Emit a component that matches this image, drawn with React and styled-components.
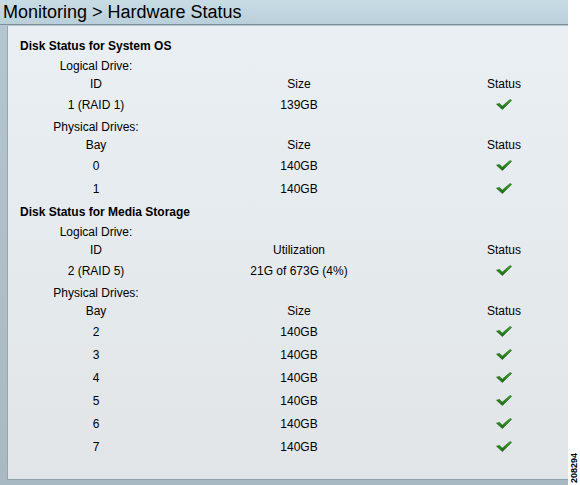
import React from "react";
import styled, { createGlobalStyle } from "styled-components";

const GlobalStyle = createGlobalStyle`
  body {
    margin: 0;
    background: #ffffff;
    font-family: "Liberation Sans", Arial, sans-serif;
  }
`;

const systemOs = {
  title: "Disk Status for System OS",
  logical: { head: ["ID", "Size", "Status"], rows: [["1 (RAID 1)", "139GB"]] },
  physical: {
    head: ["Bay", "Size", "Status"],
    rows: [
      ["0", "140GB"],
      ["1", "140GB"]
    ]
  }
};

const mediaStorage = {
  title: "Disk Status for Media Storage",
  logical: {
    head: ["ID", "Utilization", "Status"],
    rows: [["2 (RAID 5)", "21G of 673G (4%)"]]
  },
  physical: {
    head: ["Bay", "Size", "Status"],
    rows: ["2", "3", "4", "5", "6", "7"].map((b) => [b, "140GB"])
  }
};

function Check() {
  return (
    <svg width="16" height="11" viewBox="0 0 16 11">
      <defs>
        <linearGradient id="chk" x1="0" y1="0" x2="0" y2="1">
          <stop offset="0" stopColor="#3fae2a" />
          <stop offset="1" stopColor="#17650f" />
        </linearGradient>
      </defs>
      <path
        d="M0.5 5.2 L3.6 4.4 L6.2 7.2 L14.2 0.4 L15.6 1.4 L6.4 10.6 Z"
        fill="url(#chk)"
        stroke="#1b5e12"
        strokeWidth="0.6"
        strokeLinejoin="round"
      />
    </svg>
  );
}

function DriveTable({ label, data }) {
  return (
    <>
      <Label>{label}</Label>
      <Grid>
        {data.head.map((h) => (
          <HeadCell key={h}>{h}</HeadCell>
        ))}
      </Grid>
      {data.rows.map((r) => (
        <Grid key={r[0]}>
          <DataCell>{r[0]}</DataCell>
          <DataCell>{r[1]}</DataCell>
          <DataCell>
            <Check />
          </DataCell>
        </Grid>
      ))}
    </>
  );
}

function Section({ data, first }) {
  return (
    <>
      <SectionTitle $first={first}>{data.title}</SectionTitle>
      <DriveTable label="Logical Drive:" data={data.logical} />
      <DriveTable label="Physical Drives:" data={data.physical} />
    </>
  );
}

export default function App() {
  return (
    <Page>
      <GlobalStyle />
      <Main>
        <Header>Monitoring &gt; Hardware Status</Header>
        <Body>
          <Panel>
            <Section data={systemOs} first />
            <Section data={mediaStorage} />
          </Panel>
        </Body>
      </Main>
      <Side>
        <Stamp>208294</Stamp>
      </Side>
    </Page>
  );
}

const Page = styled.div`
  display: flex;
  width: 580px;
  height: 485px;
  overflow: hidden;
`;

const Main = styled.div`
  width: 568px;
  display: flex;
  flex-direction: column;
  background: linear-gradient(#b4c6d1, #a9b9c3);
`;

const Header = styled.div`
  height: 25px;
  box-sizing: border-box;
  border-bottom: 1px solid #7c8e98;
  background: linear-gradient(#c8dce6, #b9cfda);
  font-size: 18px;
  line-height: 24px;
  padding-left: 3px;
  color: #000;
`;

const Body = styled.div`
  flex: 1;
  display: flex;
  padding: 1px 0 5px 7px;
`;

const Panel = styled.div`
  flex: 1;
  box-sizing: border-box;
  border-left: 1px solid #95a6b0;
  border-bottom: 1px solid #8f9fa9;
  background: linear-gradient(#e9eff3, #e1e5e8);
  padding: 11px 0 0 12px;
  font-size: 12px;
  color: #000;
`;

const SectionTitle = styled.div`
  font-weight: bold;
  line-height: 18px;
  margin-top: ${(p) => (p.$first ? "0" : "3px")};
`;

const Grid = styled.div`
  display: grid;
  grid-template-columns: 112px 294px 116px;
  margin-left: 20px;
  text-align: center;
`;

const Label = styled(Grid)`
  display: block;
  width: 112px;
  line-height: 19px;
  margin-top: 2px;
  white-space: nowrap;
`;

const HeadCell = styled.div`
  line-height: 17px;
`;

const DataCell = styled.div`
  height: 23px;
  display: flex;
  align-items: center;
  justify-content: center;
`;

const Side = styled.div`
  width: 12px;
  display: flex;
  align-items: flex-end;
  justify-content: center;
  padding-bottom: 2px;
  box-sizing: border-box;
`;

const Stamp = styled.div`
  writing-mode: vertical-rl;
  transform: rotate(180deg);
  font-size: 9px;
  line-height: 9px;
  font-weight: bold;
  color: #000;
`;
